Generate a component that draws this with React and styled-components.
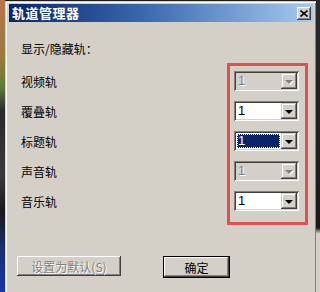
import React from "react";
import styled, { createGlobalStyle } from "styled-components";

const Global = createGlobalStyle`
  html, body { margin: 0; padding: 0; background: #1c1c1c; }
  body { font-family: "Noto Sans CJK SC", "Liberation Sans", sans-serif; }
`;

const Stage = styled.div`
  position: relative;
  width: 320px;
  height: 292px;
  overflow: hidden;
  display: flex;
  background: #1c1c1c;
`;

const LeftStrip = styled.div`
  width: 5px;
  flex: none;
  background: linear-gradient(
    to bottom,
    #b8744a 0%,
    #9a7a3c 20%,
    #5e7a3a 30%,
    #2a2a2a 38%,
    #3a3a3a 60%,
    #1a1a1a 72%,
    #1c2c70 85%,
    #1838a8 100%
  );
`;

const RightStrip = styled.div`
  flex: 1;
  background: linear-gradient(to bottom, #2a2a2a 0%, #1a1a1a 78%, #d4d0c8 80%);
`;

const Window = styled.div`
  width: 311px;
  flex: none;
  margin-top: 1px;
  background: #d4d0c8;
  box-sizing: border-box;
  border-top: 1px solid #d4d0c8;
  border-left: 1px solid #d4d0c8;
  box-shadow: inset 1px 1px #ffffff, inset -1px 0 #808080;
  padding: 2px 3px 0 3px;
  display: flex;
  flex-direction: column;
`;

const TitleBar = styled.div`
  height: 18px;
  display: flex;
  align-items: center;
  justify-content: space-between;
  padding: 0 2px 0 3px;
  background: linear-gradient(to right, #0a246a 0%, #3a6ab0 45%, #a6caf0 100%);
`;

const TitleText = styled.span`
  color: #fff;
  font-weight: 700;
  font-size: 13px;
  letter-spacing: 0.5px;
  line-height: 18px;
`;

const CloseButton = styled.div`
  width: 14px;
  height: 13px;
  background: #d4d0c8;
  box-sizing: border-box;
  box-shadow: inset -1px -1px #404040, inset 1px 1px #ffffff, inset -2px -2px #808080;
  display: flex;
  align-items: center;
  justify-content: center;
`;

const Body = styled.div`
  padding: 17px 0 0 12px;
  display: flex;
  flex-direction: column;
`;

const Heading = styled.div`
  font-size: 12px;
  color: #000;
  height: 18px;
  line-height: 18px;
  margin-top: 1px;
  margin-bottom: 13px;
`;

const Rows = styled.div`
  display: flex;
  flex-direction: column;
  gap: 10px;
`;

const Row = styled.div`
  height: 20px;
  display: flex;
  align-items: center;
  justify-content: space-between;
  padding-right: 14px;
`;

const Label = styled.span`
  font-size: 12px;
  color: #000;
`;

const Combo = styled.div`
  width: 65px;
  height: 20px;
  box-sizing: border-box;
  display: flex;
  align-items: center;
  padding: 2px;
  background: ${(p) => (p.$disabled ? "#d4d0c8" : "#ffffff")};
  box-shadow: inset 1px 1px #808080, inset -1px -1px #ffffff, inset 2px 2px #404040,
    inset -2px -2px #d4d0c8;
`;

const Field = styled.div`
  flex: 1;
  height: 16px;
  display: flex;
  align-items: center;
  padding-left: 1px;
`;

const Value = styled.span`
  font-family: "Liberation Sans", Arial, sans-serif;
  font-size: 13px;
  line-height: 14px;
  height: 14px;
  padding: 0 1px;
  color: ${(p) => (p.$disabled ? "#808080" : p.$selected ? "#ffffff" : "#000")};
  text-shadow: ${(p) => (p.$disabled ? "1px 1px #ffffff" : "none")};
  background: ${(p) => (p.$selected ? "#0a246a" : "transparent")};
  outline: ${(p) => (p.$selected ? "1px dotted #ffffff" : "none")};
  outline-offset: -1px;
  ${(p) => (p.$selected ? "flex: 1; margin-right: 1px;" : "")}
`;

const ArrowBtn = styled.div`
  width: 16px;
  height: 16px;
  flex: none;
  background: #d4d0c8;
  box-sizing: border-box;
  box-shadow: inset -1px -1px #404040, inset 1px 1px #d4d0c8, inset -2px -2px #808080,
    inset 2px 2px #ffffff;
  display: flex;
  align-items: center;
  justify-content: center;
`;

const Tri = styled.div`
  width: 0;
  height: 0;
  border-left: 4px solid transparent;
  border-right: 4px solid transparent;
  border-top: 4px solid ${(p) => (p.$disabled ? "#808080" : "#000")};
  filter: ${(p) => (p.$disabled ? "drop-shadow(1px 1px 0 #ffffff)" : "none")};
  margin-top: 1px;
`;

const ButtonRow = styled.div`
  display: flex;
  gap: 42px;
  margin-top: 45px;
  padding-left: 8px;
  margin-left: -12px;
`;

const Button = styled.div`
  width: ${(p) => p.$w}px;
  height: ${(p) => (p.$default ? 22 : 20)}px;
  box-sizing: border-box;
  background: #d4d0c8;
  display: flex;
  align-items: center;
  justify-content: center;
  font-size: 12px;
  color: ${(p) => (p.$disabled ? "#808080" : "#000")};
  text-shadow: ${(p) => (p.$disabled ? "1px 1px #ffffff" : "none")};
  border: ${(p) => (p.$default ? "1px solid #000" : "none")};
  box-shadow: inset -1px -1px #404040, inset 1px 1px #ffffff, inset -2px -2px #808080,
    inset 2px 2px #d4d0c8;
`;

const RedBox = styled.div`
  position: absolute;
  left: 227px;
  top: 63px;
  width: 81px;
  height: 162px;
  box-sizing: border-box;
  border: 3px solid #e0504e;
  pointer-events: none;
`;

const tracks = [
  { label: "视频轨", disabled: true },
  { label: "覆叠轨" },
  { label: "标题轨", selected: true },
  { label: "声音轨", disabled: true },
  { label: "音乐轨" },
];

export default function App() {
  return (
    <>
      <Global />
      <Stage>
        <LeftStrip />
        <Window>
          <TitleBar>
            <TitleText>轨道管理器</TitleText>
            <CloseButton>
              <svg width="8" height="7" viewBox="0 0 8 7">
                <path d="M0.5 0.5 L7.5 6.5 M7.5 0.5 L0.5 6.5" stroke="#000" strokeWidth="1.6" />
              </svg>
            </CloseButton>
          </TitleBar>
          <Body>
            <Heading>显示/隐藏轨：</Heading>
            <Rows>
              {tracks.map((t) => (
                <Row key={t.label}>
                  <Label>{t.label}</Label>
                  <Combo $disabled={t.disabled}>
                    <Field>
                      <Value $disabled={t.disabled} $selected={t.selected}>
                        1
                      </Value>
                    </Field>
                    <ArrowBtn>
                      <Tri $disabled={t.disabled} />
                    </ArrowBtn>
                  </Combo>
                </Row>
              ))}
            </Rows>
            <ButtonRow>
              <Button $w={104} $disabled>
                设置为默认(S)
              </Button>
              <Button $w={67} $default>
                确定
              </Button>
            </ButtonRow>
          </Body>
        </Window>
        <RightStrip />
        <RedBox />
      </Stage>
    </>
  );
}
